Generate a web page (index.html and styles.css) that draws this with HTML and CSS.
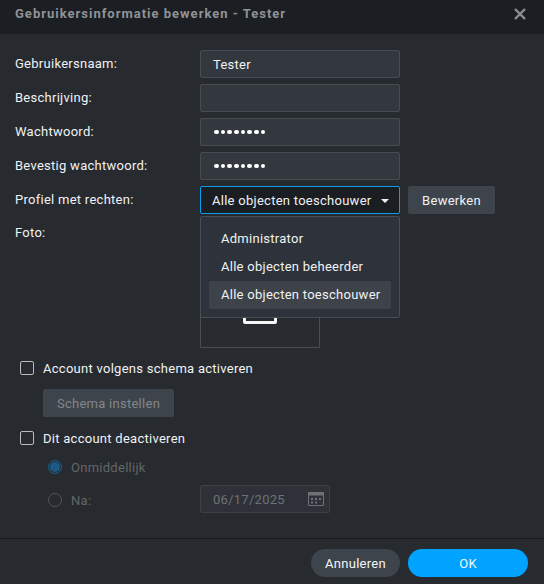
FILE: index.html
```html
<!DOCTYPE html>
<html lang="nl">
<head>
<meta charset="utf-8">
<title>Gebruikersinformatie bewerken</title>
<link rel="stylesheet" href="styles.css">
</head>
<body>
<div class="dialog">
  <header class="titlebar">
    <h1 class="title">Gebruikersinformatie bewerken - Tester</h1>
    <svg class="close" width="12" height="12" viewBox="0 0 12 12"><path d="M1 1l10 10M11 1L1 11" stroke="#8b8f93" stroke-width="2.4" fill="none"/></svg>
  </header>
  <main class="body">
    <div class="row"><label class="label">Gebruikersnaam:</label><div class="input">Tester</div></div>
    <div class="row"><label class="label">Beschrijving:</label><div class="input"></div></div>
    <div class="row"><label class="label">Wachtwoord:</label><div class="input dots"><i></i><i></i><i></i><i></i><i></i><i></i><i></i><i></i></div></div>
    <div class="row"><label class="label">Bevestig wachtwoord:</label><div class="input dots"><i></i><i></i><i></i><i></i><i></i><i></i><i></i><i></i></div></div>
    <div class="row">
      <label class="label">Profiel met rechten:</label>
      <div class="input select">Alle objecten toeschouwer<span class="caret"></span>
        <ul class="menu">
          <li>Administrator</li>
          <li>Alle objecten beheerder</li>
          <li class="active">Alle objecten toeschouwer</li>
        </ul>
      </div>
      <button class="btn edit">Bewerken</button>
    </div>
    <div class="photo-row">
      <label class="label">Foto:</label>
      <div class="photo"><span class="photo-icon"></span></div>
    </div>
    <div class="check-row first"><span class="check"></span>Account volgens schema activeren</div>
    <button class="btn schedule">Schema instellen</button>
    <div class="check-row second"><span class="check"></span>Dit account deactiveren</div>
    <div class="radio-row now"><span class="radio on"></span>Onmiddellijk</div>
    <div class="radio-row after">
      <span class="radio"></span><span class="after-label">Na:</span>
      <div class="date">06/17/2025
        <svg class="cal" width="16" height="14" viewBox="0 0 16 14"><path d="M.5.5h15v13H.5z" fill="none" stroke="#6d7176"/><path d="M0 0h16v3.5H0z" fill="#6d7176"/><path d="M3 6h2v2H3zM7 6h2v2H7zM11 6h2v2h-2zM3 9.5h2v2H3zM7 9.5h2v2H7z" fill="#6d7176"/></svg>
      </div>
    </div>
  </main>
  <footer class="footer">
    <button class="pill cancel">Annuleren</button>
    <button class="pill ok">OK</button>
  </footer>
</div>
</body>
</html>
```
FILE: styles.css
```css
* { box-sizing: border-box; }
html, body { margin: 0; height: 100%; }
body { background: #272a2f; font-family: Roboto, "Liberation Sans", sans-serif; font-size: 13px; color: #f0f2f4; letter-spacing: .27px; }
.dialog { width: 544px; height: 584px; display: flex; flex-direction: column; overflow: hidden; }
.titlebar { height: 34px; flex: none; background: #1b1e23; display: flex; align-items: center; justify-content: space-between; padding: 0 18px 7px 15px; }
.title { margin: 0; font-size: 13px; font-weight: 700; color: #8f9396; letter-spacing: 1px; }
.close { display: block; }
.body { flex: 1; padding: 16px 0 0 15px; }
.row { display: flex; align-items: center; height: 28px; margin-bottom: 6px; }
.label { width: 185px; flex: none; padding-bottom: 2px; }
.input { width: 200px; height: 28px; flex: none; border: 1px solid #474c53; border-radius: 2px; background: #33383f; padding: 0 12px; display: flex; align-items: center; position: relative; }
.dots { gap: 2.1px; padding-left: 13px; }
.dots i { width: 4.6px; height: 4.6px; border-radius: 50%; background: #fff; }
.select { background: #1a1d21; border-color: #0a9cf0; padding-left: 11px; }
.caret { position: absolute; right: 10px; top: 12px; border: 4px solid transparent; border-top-color: #f0f2f4; border-bottom: 0; }
.menu { position: absolute; left: -1px; top: 29px; width: 200px; height: 102px; margin: 0; padding: 8px; list-style: none; background: #2e323a; border: 1px solid #4a4e54; border-radius: 2px; z-index: 2; }
.menu li { height: 28px; line-height: 27px; padding-left: 12px; border-radius: 2px; }
.active { background: #3e4249; }
.btn { font: inherit; letter-spacing: inherit; border: 0; border-radius: 2px; background: #3e444b; color: #f0f2f4; height: 28px; padding: 0; }
.edit { width: 87px; margin-left: 8px; }
.photo-row { display: flex; height: 128px; margin-top: 2px; }
.photo-row .label { padding-top: 5px; }
.photo { width: 120px; height: 120px; margin-top: 8px; border: 1px solid #474c53; position: relative; }
.photo-icon { position: absolute; left: 42px; bottom: 23px; width: 34px; height: 30px; border: 3px solid #f4f4f4; border-radius: 2px; background: #272a2f; }
.check-row { display: flex; align-items: center; gap: 9px; height: 16px; padding-left: 5px; }
.first { margin-top: 12px; }
.second { margin-top: 13px; }
.check { width: 14px; height: 14px; border: 1px solid #b9bcbf; border-radius: 2px; flex: none; }
.schedule { display: block; width: 131px; margin: 13px 0 0 28px; color: #82878b; }
.radio-row { display: flex; align-items: center; color: #62666a; padding-left: 33px; }
.now { height: 16px; margin-top: 13px; gap: 9px; }
.after { height: 28px; margin-top: 11px; }
.radio { width: 14px; height: 14px; border-radius: 50%; border: 1px solid #505458; flex: none; }
.radio.on { background: #1c5a85; border-color: #1c5a85; box-shadow: inset 0 0 0 1px #272a2f; }
.after-label { margin-left: 9px; width: 129px; }
.date { width: 130px; height: 28px; margin-bottom: 2px; border: 1px solid #3c4046; border-radius: 2px; background: #2e3238; padding: 0 12px; display: flex; align-items: center; justify-content: space-between; color: #6d7176; }
.cal { margin-right: -7px; }
.footer { height: 46px; flex: none; border-top: 1px solid #17191d; display: flex; justify-content: flex-end; gap: 8px; padding: 10px 16px 0 0; }
.pill { font: inherit; letter-spacing: inherit; border: 0; height: 28px; border-radius: 14px; color: #f4f6f8; padding: 0; }
.cancel { width: 89px; background: #3e444b; }
.ok { width: 120px; background: #00a3ff; }
```
